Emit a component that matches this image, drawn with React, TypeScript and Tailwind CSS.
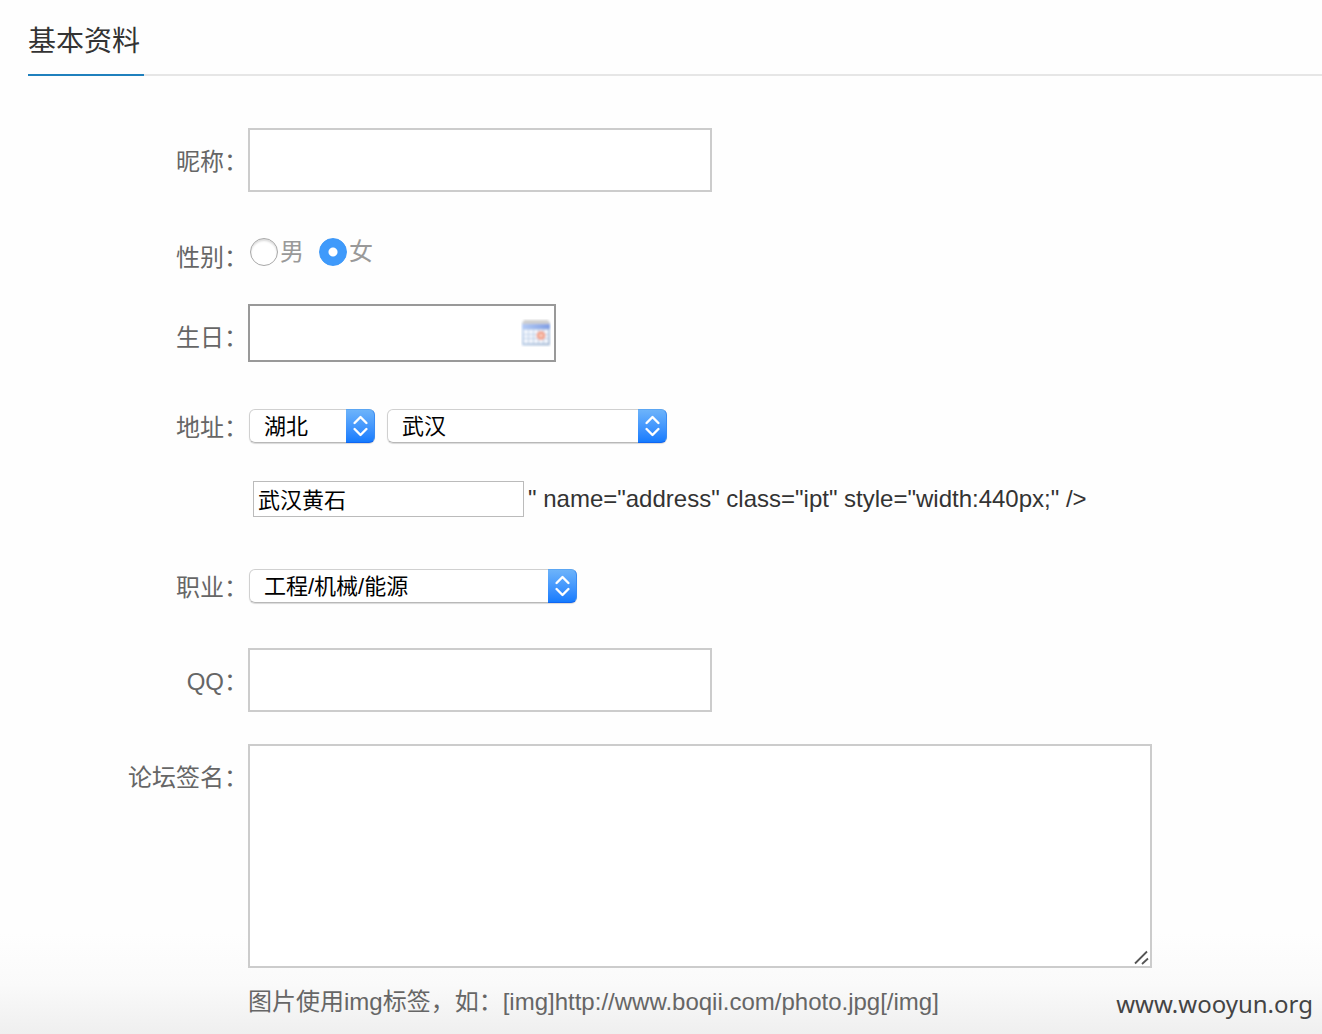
import React from "react";

function Row({
  label,
  htmlFor,
  className,
  children,
}: {
  label: string;
  htmlFor: string;
  className: string;
  children: React.ReactNode;
}) {
  return (
    <div className={`flex items-start ${className}`}>
      <label htmlFor={htmlFor} className="w-[248px] shrink-0 text-right leading-[68px] text-[#666]">
        {label}
      </label>
      <div className="min-w-0 flex-1">{children}</div>
    </div>
  );
}

function Select({
  id,
  label,
  options,
  className,
}: {
  id: string;
  label?: string;
  options: string[];
  className: string;
}) {
  return (
    <div
      className={`relative h-[34px] rounded-[6px] shadow-[0_1px_1px_rgba(0,0,0,0.15)] ${className}`}
    >
      <select
        id={id}
        aria-label={label}
        className="block h-full w-full appearance-none rounded-[6px] border border-[#d0d0d0] border-b-[#b8b8b8] bg-white pt-[2px] pr-8 pl-[14px] text-[22px] leading-[30px] text-black outline-none"
      >
        {options.map((o) => (
          <option key={o}>{o}</option>
        ))}
      </select>
      <span className="pointer-events-none absolute inset-y-0 right-0 flex w-[29px] items-center justify-center rounded-r-[6px] border-t border-r border-b border-t-[#5ba6f3] border-r-[#3a8cf3] border-b-[#0f66f2] bg-linear-to-b from-[#6cb3fa] to-[#147bfe]">
        <svg
          width="16"
          height="22"
          viewBox="0 0 16 22"
          fill="none"
          stroke="white"
          strokeWidth="2.4"
          strokeLinecap="round"
          strokeLinejoin="round"
          aria-hidden="true"
        >
          <path d="M2.600 8 8.500 2 14.400 8M2.600 14 8.500 20 14.400 14" />
        </svg>
      </span>
    </div>
  );
}

function Radio({ label, checked }: { label: string; checked?: boolean }) {
  return (
    <label className="flex items-center gap-[2px]">
      <input
        type="radio"
        name="gender"
        id={checked ? "female" : "male"}
        defaultChecked={checked}
        className="h-7 w-7 appearance-none rounded-full border border-[#a8a8a8] bg-white shadow-[inset_0_2px_2px_rgba(0,0,0,0.14)] checked:border-[#3d98f8] checked:bg-[radial-gradient(circle,#fff_4px,#3f9afb_5px)] checked:shadow-none"
      />
      <span className="leading-[34px]">{label}</span>
    </label>
  );
}

function CalendarIcon() {
  return (
    <svg width="30" height="28" viewBox="0 0 30 28" aria-hidden="true">
      <defs>
        <linearGradient id="calBody" x1="0" y1="0" x2="1" y2="1">
          <stop offset="0" stopColor="#c9dcf5" />
          <stop offset="1" stopColor="#a9bdd6" />
        </linearGradient>
        <linearGradient id="calHead" x1="0" y1="0" x2="1" y2="0">
          <stop offset="0" stopColor="#b5ccf6" />
          <stop offset="1" stopColor="#7f9de3" />
        </linearGradient>
        <filter id="soft" x="-10%" y="-10%" width="120%" height="120%">
          <feGaussianBlur stdDeviation="0.8" />
        </filter>
      </defs>
      <g filter="url(#soft)">
        <rect x="1" y="3" width="28" height="23.500" rx="1" fill="url(#calBody)" />
        <path d="M3 1h24l2 4H1z" fill="#cfcfcf" />
        <rect x="1" y="5" width="28" height="5" fill="url(#calHead)" />
        <path
          d="M3 11h4v4H3zM8 11h4v4H8zM13 11h4v4h-4zM18 11h4v4h-4zM23 11h4v4h-4zM3 16h4v3H3zM8 16h4v3H8zM13 16h4v3h-4zM23 16h4v3h-4zM3 20h4v4H3zM8 20h4v4H8zM13 20h4v4h-4zM18 20h4v4h-4zM23 20h4v4h-4z"
          fill="#f4f8fe"
        />
        <circle cx="20" cy="16.500" r="4.500" fill="#f3a58e" />
        <circle cx="20" cy="16.500" r="1.500" fill="#fbd5c6" />
      </g>
    </svg>
  );
}

export default function App() {
  return (
    <main className="relative min-h-screen overflow-hidden bg-[linear-gradient(to_top,#efefef,#fafafa_50px,#fefefe_100px)] pb-[14px] font-['Liberation_Sans','Noto_Sans_CJK_SC',sans-serif] text-[24px] text-[#333]">
      <header className="ml-7 flex border-b-2 border-[#e6e6e6]">
        <h1 className="-mb-[2px] w-[116px] border-b-2 border-[#1f80bd] pt-5 pb-[10px] text-[28px] leading-[44px]">
          基本资料
        </h1>
      </header>

      <form className="pt-[52px]">
        <Row label="昵称：" htmlFor="nick" className="">
          <input
            id="nick"
            className="block h-16 w-full max-w-[464px] border-2 border-[#ccc] bg-white px-3 outline-none"
          />
        </Row>

        <Row label="性别：" htmlFor="female" className="mt-7">
          <div className="flex h-14 items-center gap-[15px] pl-[2px] text-[#999]">
            <Radio label="男" />
            <Radio label="女" checked />
          </div>
        </Row>

        <Row label="生日：" htmlFor="birthday" className="mt-3">
          <div className="flex h-[58px] w-full max-w-[308px] items-center border-2 border-[#999] bg-white pr-[3px]">
            <input id="birthday" className="h-full min-w-0 flex-1 px-2 outline-none" />
            <button type="button" aria-label="选择日期">
              <CalendarIcon />
            </button>
          </div>
        </Row>

        <Row label="地址：" htmlFor="province" className="mt-[22px]">
          <div className="flex h-16 items-center gap-3 pl-[1px]">
            <Select id="province" options={["湖北"]} className="w-[126px]" />
            <Select id="city" label="城市" options={["武汉"]} className="w-[280px]" />
          </div>
          <div className="mt-[23px] flex items-center gap-1 pl-[5px]">
            <input
              aria-label="详细地址"
              defaultValue="武汉黄石"
              className="h-9 w-[271px] border border-[#bbb] bg-white px-[4px] pb-[2px] text-[22px] text-black outline-none"
            />
            <span className="leading-9 whitespace-nowrap">
              {'" name="address" class="ipt" style="width:440px;" />'}
            </span>
          </div>
        </Row>

        <Row label="职业：" htmlFor="job" className="mt-[37px]">
          <div className="flex h-16 items-center pl-[1px]">
            <Select id="job" options={["工程/机械/能源"]} className="w-[328px]" />
          </div>
        </Row>

        <Row label="QQ：" htmlFor="qq" className="mt-[26px]">
          <input
            id="qq"
            className="block h-16 w-full max-w-[464px] border-2 border-[#ccc] bg-white px-3 outline-none"
          />
        </Row>

        <Row label="论坛签名：" htmlFor="sign" className="mt-7">
          <div className="relative max-w-[904px]">
            <textarea
              id="sign"
              className="block h-56 w-full resize-none border-2 border-[#ccc] bg-white p-3 outline-none"
            />
            <svg
              className="pointer-events-none absolute right-[3px] bottom-[3px]"
              width="16"
              height="16"
              viewBox="0 0 16 16"
              stroke="#555"
              strokeWidth="1.8"
              aria-hidden="true"
            >
              <path d="M2 14.500 14 2.500M9 15 15 9.500" />
            </svg>
          </div>
          <p className="mt-4 leading-9 text-[#666]">
            图片使用img标签，如：[img]http://www.boqii.com/photo.jpg[/img]
          </p>
        </Row>
      </form>

      <span className="absolute right-[9px] bottom-[12px] font-['Noto_Sans',sans-serif] text-[24px] leading-9 text-[#444]">
        www.wooyun.org
      </span>
    </main>
  );
}
